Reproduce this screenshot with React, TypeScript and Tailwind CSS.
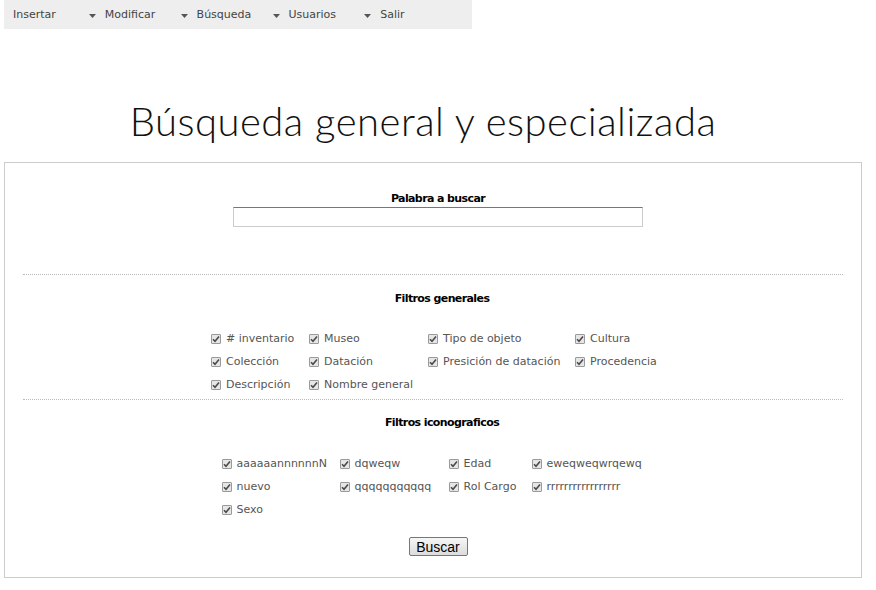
const menu = ["Insertar", "Modificar", "Búsqueda", "Usuarios", "Salir"];

const generales = [
  ["# inventario", "Museo", "Tipo de objeto", "Cultura"],
  ["Colección", "Datación", "Presición de datación", "Procedencia"],
  ["Descripción", "Nombre general"],
];

const iconograficos = [
  ["aaaaaannnnnnN", "dqweqw", "Edad", "eweqweqwrqewq"],
  ["nuevo", "qqqqqqqqqqq", "Rol Cargo", "rrrrrrrrrrrrrrrrr"],
  ["Sexo"],
];

const Check = ({ label }: { label: string }) => (
  <label className="flex items-center gap-[5px] h-[23px] whitespace-nowrap">
    <span className="w-[10px] h-[10px] border border-[#9a9a9a] bg-[#e6e6e6] rounded-[1px] flex items-center justify-center">
      <svg width="8" height="8" viewBox="0 0 8 8">
        <path d="M1 4.2 L3 6.2 L7 1.5" stroke="#4a4a4a" strokeWidth="1.6" fill="none" />
      </svg>
    </span>
    <span className="pt-[2px]">{label}</span>
  </label>
);

const Filtros = ({ rows, cols }: { rows: string[][]; cols: string }) => (
  <div className={`grid ${cols} w-fit mx-auto`}>
    {rows.map((row, i) =>
      [0, 1, 2, 3].map((j) =>
        row[j] ? <Check key={`${i}-${j}`} label={row[j]} /> : <span key={`${i}-${j}`} />
      )
    )}
  </div>
);

const Heading = ({ children }: { children: string }) => (
  <div className="font-bold text-black text-center tracking-[-0.6px] h-[16px] leading-[16px]">{children}</div>
);

export default function App() {
  return (
    <div className="w-[876px] h-[590px] bg-white text-[11px] text-[#555] font-['DejaVu_Sans',sans-serif]">
      <nav className="ml-[4px] w-[468px] h-[29px] bg-[#eeeeee] flex items-center pl-[9px] pt-[2px] text-[#444]">
        {menu.map((m, i) => (
          <div key={m} className="w-[94px] flex items-center">
            <span className="w-[76px]">{m}</span>
            {i < menu.length - 1 && (
              <svg width="7" height="4" viewBox="0 0 7 4">
                <path d="M0 0 H7 L3.5 4 Z" fill="#555" />
              </svg>
            )}
          </div>
        ))}
      </nav>

      <h1 className="mt-[62px] h-[71px] text-center pr-[30px] font-['Lato',sans-serif] font-light text-[40px] leading-[60px] text-[#111] tracking-[0.5px]">
        Búsqueda general y especializada
      </h1>

      <div className="mx-[4px] w-[858px] h-[416px] border border-[#cccccc] px-[18px]">
        <div className="pt-[28px] h-[111px] flex flex-col items-center pl-[10px]">
          <Heading>Palabra a buscar</Heading>
          <input className="w-[410px] h-[20px] border border-[#ccc] border-t-[#777] outline-none" />
        </div>

        <div className="border-t border-dotted border-[#bbb] pt-[16px] h-[125px]">
          <div className="pl-[18px] mb-[20px]">
            <Heading>Filtros generales</Heading>
          </div>
          <Filtros rows={generales} cols="grid-cols-[98px_119px_147px_80px]" />
        </div>

        <div className="border-t border-dotted border-[#bbb] pt-[15px]">
          <div className="pl-[18px] mb-[21px]">
            <Heading>Filtros iconograficos</Heading>
          </div>
          <Filtros rows={iconograficos} cols="grid-cols-[118px_109px_83px_113px]" />
          <div className="flex justify-center mt-[16px] pl-[10px]">
            <button className="w-[59px] h-[19px] border border-[#777] rounded-[2px] bg-gradient-to-b from-[#f6f6f6] to-[#dcdcdc] text-black text-[14px] leading-[16px] font-['Liberation_Sans',sans-serif]">
              Buscar
            </button>
          </div>
        </div>
      </div>
    </div>
  );
}
